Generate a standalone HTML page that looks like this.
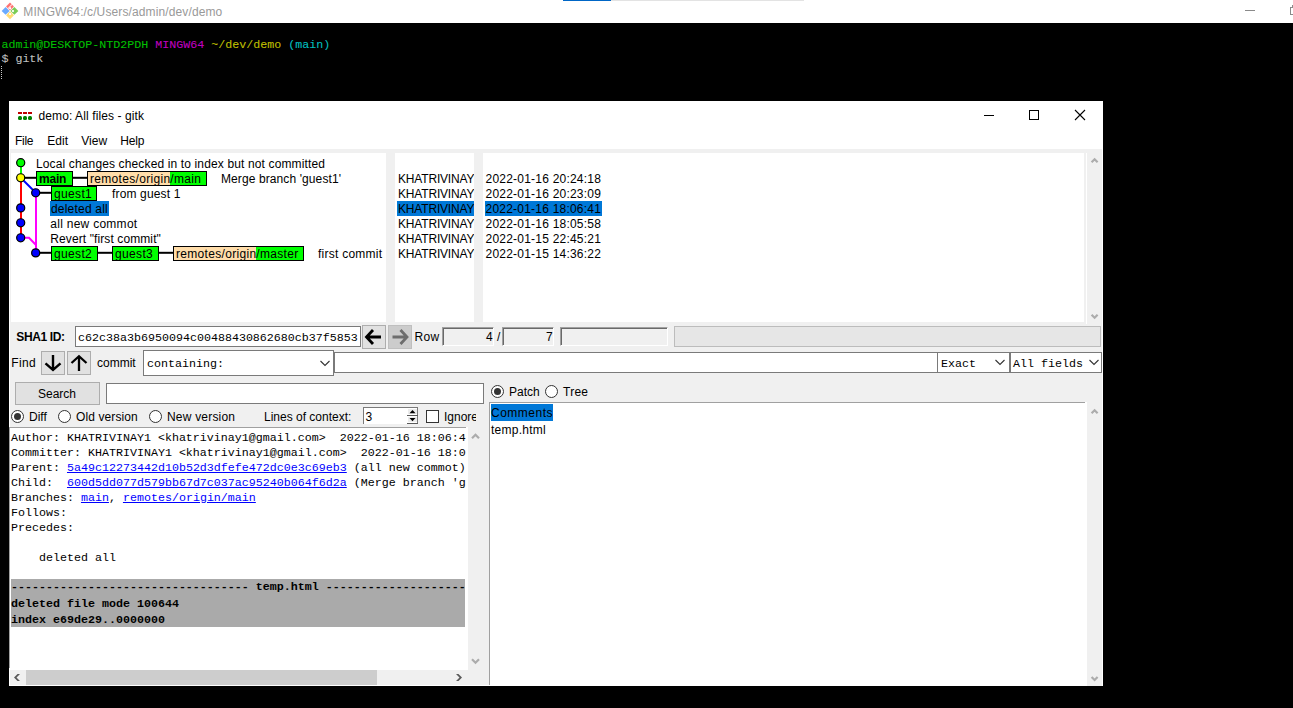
<!DOCTYPE html>
<html><head><meta charset="utf-8">
<style>
*{margin:0;padding:0;box-sizing:border-box}
html,body{width:1293px;height:708px;overflow:hidden;background:#000}
body{position:relative;font-family:"Liberation Sans",sans-serif;font-size:12px;color:#000}
.a{position:absolute}
.t{position:absolute;white-space:pre;line-height:15px;font-size:12px;font-family:"Liberation Sans",sans-serif}
.m{position:absolute;white-space:pre;line-height:15px;font-size:11.667px;font-family:"Liberation Mono",monospace}
.w{background:#fff}
.g{background:#f0f0f0}
.btn{position:absolute;background:#e1e1e1;border:1px solid #adadad}
.ent{position:absolute;background:#fff;border:1px solid #7a7a7a}
.sunk{position:absolute;background:#f0f0f0;border-top:1px solid #a0a0a0;border-left:1px solid #a0a0a0;border-right:1px solid #fff;border-bottom:1px solid #fff;box-shadow:inset 1px 1px 0 #696969}
.radio{position:absolute;width:13px;height:13px;border:1px solid #333;border-radius:50%;background:#fff}
.radio.on::after{content:"";position:absolute;left:2px;top:2px;width:7px;height:7px;border-radius:50%;background:#333}
.tag{position:absolute;height:15px;border:1px solid #000;background:#0f0}
.dot{position:absolute;width:10px;height:10px;border-radius:50%;border:1px solid #000}
.hl{position:absolute;background:#0078d7}
</style></head><body>

<!-- ===== terminal window ===== -->
<div class="a w" style="left:0;top:0;width:1293px;height:23px"></div>
<div class="a" style="left:563px;top:0;width:48px;height:1px;background:#0066c6"></div>
<div class="a" style="left:611px;top:0;width:193px;height:1px;background:#e3e3e3"></div>
<svg class="a" style="left:0;top:0" width="22" height="23" viewBox="0 0 22 23">
  <g transform="rotate(45 10 10.9)">
    <rect x="4.1" y="5.0" width="5.6" height="5.6" fill="#ff7373"/>
    <rect x="10.3" y="5.0" width="5.6" height="5.6" fill="#7acc55"/>
    <rect x="10.3" y="11.2" width="5.6" height="5.6" fill="#ffdb73"/>
    <rect x="4.1" y="11.2" width="5.6" height="5.6" fill="#6aaaff"/>
    <circle cx="8.2" cy="8.9" r="1.1" fill="#fff"/>
    <circle cx="12.2" cy="8.9" r="1.1" fill="#fff"/>
    <circle cx="12.2" cy="13" r="1.1" fill="#fff"/>
    <rect x="6.5" y="5" width="0.8" height="5.6" fill="#fff"/>
  </g>
</svg>
<div class="t" style="left:23.3px;top:5px;color:#999;letter-spacing:0.12px">MINGW64:/c/Users/admin/dev/demo</div>
<div class="a" style="left:1245px;top:10px;width:10px;height:1px;background:#8a8a8a"></div>
<div class="a" style="left:1290px;top:7px;width:10px;height:8px;border:1px solid #8a8a8a"></div>
<div class="a" style="left:1292px;top:5px;width:5px;height:3px;border-top:1px solid #8a8a8a;border-left:1px solid #8a8a8a"></div>

<div class="m" style="left:1.4px;top:38px;color:#00bf00;-webkit-text-stroke:0.1px">admin@DESKTOP-NTD2PDH <span style="color:#bf00bf">MINGW64</span> <span style="color:#bfbf00">~/dev/demo</span> <span style="color:#00bfbf">(main)</span></div>
<div class="m" style="left:1.4px;top:52px;color:#bfbfbf;-webkit-text-stroke:0.1px">$ gitk</div>
<div class="a" style="left:1px;top:66px;width:1px;height:13px;border-left:1px dotted #c8c8c8"></div>

<!-- ===== gitk window ===== -->
<div class="a" style="left:9px;top:101px;width:1094px;height:585px;background:#f0f0f0;border:1px solid #fff"></div>
<div class="a w" style="left:10px;top:101px;width:1092px;height:48px"></div>
<!-- icon -->
<div class="a" style="left:18px;top:112px;width:4px;height:2px;background:#c00000"></div>
<div class="a" style="left:23px;top:112px;width:4px;height:2px;background:#c00000"></div>
<div class="a" style="left:28px;top:112px;width:4px;height:2px;background:#c00000"></div>
<div class="a" style="left:18px;top:116px;width:4px;height:4px;background:#008000;border-radius:1.5px"></div>
<div class="a" style="left:23px;top:116px;width:4px;height:4px;background:#008000;border-radius:1.5px"></div>
<div class="a" style="left:28px;top:116px;width:4px;height:4px;background:#008000;border-radius:1.5px"></div>
<div class="t" style="left:38.5px;top:109px;letter-spacing:0.1px">demo: All files - gitk</div>
<!-- window buttons -->
<div class="a" style="left:984px;top:115px;width:10px;height:1px;background:#000"></div>
<div class="a" style="left:1029px;top:110px;width:10px;height:10px;border:1px solid #000"></div>
<svg class="a" style="left:1074px;top:109px" width="12" height="12" viewBox="0 0 12 12"><path d="M1 1L11 11M11 1L1 11" stroke="#000" stroke-width="1.1"/></svg>
<!-- menu -->
<div class="t" style="left:15px;top:134px;letter-spacing:-0.3px">File</div>
<div class="t" style="left:47.3px;top:134px">Edit</div>
<div class="t" style="left:81.3px;top:134px">View</div>
<div class="t" style="left:120.3px;top:134px;letter-spacing:-0.2px">Help</div>

<!-- ===== top canvases ===== -->
<div class="a w" style="left:11px;top:153px;width:375px;height:169px;overflow:hidden">
<svg class="a" style="left:-11px;top:-153px" width="386" height="330" viewBox="0 0 386 330">
  <g fill="none" stroke-width="2">
    <line x1="21" y1="163" x2="21" y2="178" stroke="#00ff00"/>
    <line x1="21" y1="178" x2="21" y2="238" stroke="#ff0000"/>
    <line x1="21" y1="178" x2="36" y2="193" stroke="#0000ff"/>
    <line x1="36" y1="193" x2="36" y2="253" stroke="#ff00ff"/>
    <polyline points="21,237.8 29,237.8 36,245" stroke="#ff00ff"/>
    <line x1="21" y1="177.8" x2="37" y2="177.8" stroke="#000"/>
    <line x1="72" y1="177.8" x2="88" y2="177.8" stroke="#000"/>
    <line x1="36" y1="192.8" x2="52" y2="192.8" stroke="#000"/>
    <line x1="36" y1="252.8" x2="52" y2="252.8" stroke="#000"/>
    <line x1="97" y1="252.8" x2="113" y2="252.8" stroke="#000"/>
    <line x1="158" y1="252.8" x2="174" y2="252.8" stroke="#000"/>
  </g>
  <g stroke="#000" stroke-width="1.2">
    <circle cx="20.7" cy="162.7" r="4.05" fill="#00ff00"/>
    <circle cx="20.7" cy="177.8" r="4.05" fill="#ffff00"/>
    <circle cx="35.7" cy="192.8" r="4.05" fill="#0000ff"/>
    <circle cx="20.7" cy="207.9" r="4.05" fill="#0000ff"/>
    <circle cx="20.7" cy="222.8" r="4.05" fill="#0000ff"/>
    <circle cx="20.7" cy="237.8" r="4.05" fill="#0000ff"/>
    <circle cx="35.7" cy="252.9" r="4.05" fill="#0000ff"/>
  </g>
</svg>
</div>
<div class="t" style="left:36px;top:157px;letter-spacing:0.135px">Local changes checked in to index but not committed</div>
<!-- row1 tags -->
<div class="tag" style="left:36px;top:171px;width:37px"></div>
<div class="t" style="left:39px;top:172px;font-weight:bold;letter-spacing:-0.2px">main</div>
<div class="tag" style="left:87px;top:171px;width:120px;background:linear-gradient(90deg,#ffddaa 0,#ffddaa 82px,#00ff00 82px)"></div>
<div class="t" style="left:90px;top:172px;letter-spacing:0.31px">remotes/origin/main</div>
<div class="t" style="left:221px;top:172px;letter-spacing:0.1px">Merge branch 'guest1'</div>
<!-- row2 -->
<div class="tag" style="left:51px;top:186px;width:46px"></div>
<div class="t" style="left:54px;top:187px;letter-spacing:0.35px">guest1</div>
<div class="t" style="left:112px;top:187px;letter-spacing:0.15px">from guest 1</div>
<!-- row3 -->
<div class="hl" style="left:50px;top:201px;width:59px;height:15px"></div>
<div class="t" style="left:51px;top:202px;letter-spacing:0.2px">deleted all</div>
<!-- row4 -->
<div class="t" style="left:50.3px;top:217px;letter-spacing:0.27px">all new commot</div>
<!-- row5 -->
<div class="t" style="left:50.3px;top:232px;letter-spacing:0.1px">Revert "first commit"</div>
<!-- row6 -->
<div class="tag" style="left:51px;top:246px;width:47px"></div>
<div class="t" style="left:54px;top:247px;letter-spacing:0.35px">guest2</div>
<div class="tag" style="left:112px;top:246px;width:47px"></div>
<div class="t" style="left:115px;top:247px;letter-spacing:0.35px">guest3</div>
<div class="tag" style="left:173px;top:246px;width:131px;background:linear-gradient(90deg,#ffddaa 0,#ffddaa 82px,#00ff00 82px)"></div>
<div class="t" style="left:176px;top:247px;letter-spacing:0.31px">remotes/origin/master</div>
<div class="t" style="left:318px;top:247px;letter-spacing:0.25px">first commit</div>

<div class="a w" style="left:395px;top:153px;width:79px;height:169px"></div>
<div class="hl" style="left:397px;top:201px;width:77px;height:15px"></div>
<div class="a" style="left:395px;top:153px;width:79px;height:169px;overflow:hidden"><div class="t" style="left:3px;top:19px;letter-spacing:-0.18px;line-height:15px">KHATRIVINAY
KHATRIVINAY
KHATRIVINAY
KHATRIVINAY
KHATRIVINAY
KHATRIVINAY</div></div>
<div class="a w" style="left:483px;top:153px;width:601px;height:169px"></div>
<div class="hl" style="left:485px;top:201px;width:117px;height:15px"></div>
<div class="t" style="left:485.5px;top:172px;letter-spacing:0.22px">2022-01-16 20:24:18
2022-01-16 20:23:09
2022-01-16 18:06:41
2022-01-16 18:05:58
2022-01-15 22:45:21
2022-01-15 14:36:22</div>
<div class="a" style="left:1086px;top:153px;width:1px;height:171px;background:#fff"></div>
<svg class="a" style="left:1087px;top:153px" width="15" height="170" viewBox="0 0 15 170">
  <polyline points="4.6,9.2 7.6,6.2 10.6,9.2" fill="none" stroke="#acacac" stroke-width="2.2"/>
  <polyline points="4.6,161.8 7.6,164.8 10.6,161.8" fill="none" stroke="#acacac" stroke-width="2.2"/>
</svg>

<!-- ===== SHA1 row ===== -->
<div class="t" style="left:16.3px;top:330px;font-weight:bold;letter-spacing:-0.38px">SHA1 ID:</div>
<div class="ent" style="left:75px;top:326px;width:286px;height:21px"></div>
<div class="m" style="left:78px;top:331px">c62c38a3b6950094c00488430862680cb37f5853</div>
<div class="btn" style="left:362px;top:325px;width:24px;height:24px"></div>
<svg class="a" style="left:362px;top:325px" width="24" height="24" viewBox="0 0 24 24">
  <path d="M4.5 12H19M11 5L4.5 12L11 19" fill="none" stroke="#000" stroke-width="2.8"/>
</svg>
<div class="btn" style="left:388px;top:325px;width:24px;height:24px;background:#cccccc;border-color:#bfbfbf"></div>
<svg class="a" style="left:388px;top:325px" width="24" height="24" viewBox="0 0 24 24">
  <path d="M4.5 12H19M12.5 5L19 12L12.5 19" fill="none" stroke="#6d6d6d" stroke-width="2.8"/>
</svg>
<div class="t" style="left:414.5px;top:330px;letter-spacing:0.3px">Row</div>
<div class="sunk" style="left:442px;top:327px;width:52px;height:19px"></div>
<div class="t" style="left:486px;top:330px">4</div>
<div class="t" style="left:497px;top:330px">/</div>
<div class="sunk" style="left:502px;top:327px;width:52px;height:19px"></div>
<div class="t" style="left:546px;top:330px">7</div>
<div class="sunk" style="left:560px;top:327px;width:108px;height:19px"></div>
<div class="a" style="left:674px;top:326px;width:427px;height:21px;background:#e6e6e6;border:1px solid #bcbcbc"></div>

<!-- ===== Find row ===== -->
<div class="t" style="left:11.2px;top:356px;letter-spacing:0.4px">Find</div>
<div class="btn" style="left:41px;top:351px;width:24px;height:24px"></div>
<svg class="a" style="left:41px;top:351px" width="24" height="24" viewBox="0 0 24 24">
  <path d="M12 4V18.5M4.5 12.3L12 19L19.5 12.3" fill="none" stroke="#000" stroke-width="2.4"/>
</svg>
<div class="btn" style="left:67px;top:351px;width:24px;height:24px"></div>
<svg class="a" style="left:67px;top:351px" width="24" height="24" viewBox="0 0 24 24">
  <path d="M12 20V5M4.5 12L12 5.2L19.5 12" fill="none" stroke="#000" stroke-width="2.3"/>
</svg>
<div class="t" style="left:97px;top:356px">commit</div>
<div class="ent" style="left:143px;top:350px;width:191px;height:26px"></div>
<div class="m" style="left:147px;top:357px">containing:</div>
<svg class="a" style="left:319px;top:359px" width="12" height="9" viewBox="0 0 12 9"><polyline points="1.5,2 6,6.5 10.5,2" fill="none" stroke="#333" stroke-width="1.1"/></svg>
<div class="ent" style="left:334px;top:352px;width:604px;height:21px"></div>
<div class="ent" style="left:937px;top:352px;width:73px;height:21px"></div>
<div class="m" style="left:941px;top:357px">Exact</div>
<svg class="a" style="left:994px;top:358px" width="12" height="9" viewBox="0 0 12 9"><polyline points="1.5,2 6,6.5 10.5,2" fill="none" stroke="#333" stroke-width="1.1"/></svg>
<div class="ent" style="left:1010px;top:352px;width:92px;height:21px"></div>
<div class="m" style="left:1013px;top:357px">All fields</div>
<svg class="a" style="left:1088px;top:358px" width="12" height="9" viewBox="0 0 12 9"><polyline points="1.5,2 6,6.5 10.5,2" fill="none" stroke="#333" stroke-width="1.1"/></svg>

<!-- ===== search row ===== -->
<div class="btn" style="left:15px;top:382px;width:85px;height:23px"></div>
<div class="t" style="left:38px;top:387px">Search</div>
<div class="ent" style="left:106px;top:383px;width:378px;height:21px"></div>
<div class="radio on" style="left:491px;top:385px"></div>
<div class="t" style="left:509px;top:385px">Patch</div>
<div class="radio" style="left:545px;top:385px"></div>
<div class="t" style="left:563px;top:385px;letter-spacing:0.25px">Tree</div>

<!-- ===== diff options ===== -->
<div class="radio on" style="left:11px;top:410px"></div>
<div class="t" style="left:29px;top:410px">Diff</div>
<div class="radio" style="left:58px;top:410px"></div>
<div class="t" style="left:76px;top:410px;letter-spacing:0.1px">Old version</div>
<div class="radio" style="left:149px;top:410px"></div>
<div class="t" style="left:167px;top:410px;letter-spacing:0.2px">New version</div>
<div class="t" style="left:264px;top:410px">Lines of context:</div>
<div class="a" style="left:363px;top:407px;width:55px;height:17px;background:#fff;border:1px solid #7a7a7a;border-bottom:none"></div>
<div class="a" style="left:408px;top:409px;width:9px;height:5px;background:#ececec"></div>
<div class="a" style="left:408px;top:417px;width:9px;height:5px;background:#ececec"></div>
<div class="a" style="left:407px;top:415px;width:11px;height:1px;background:#5a5a5a"></div>
<div class="a" style="left:407px;top:423px;width:11px;height:1px;background:#5a5a5a"></div>
<svg class="a" style="left:407px;top:408px" width="11" height="16" viewBox="0 0 11 16">
  <path d="M2.5 5.2L5.5 2L8.5 5.2Z" fill="#000"/>
  <path d="M2.5 10L5.5 13.2L8.5 10Z" fill="#000"/>
</svg>
<div class="t" style="left:365.5px;top:410px">3</div>
<div class="a" style="left:426px;top:410px;width:13px;height:13px;border:1px solid #333;background:#fff"></div>
<div class="a" style="left:444px;top:410px;width:32px;height:15px;overflow:hidden"><div class="t" style="left:0;top:0">Ignore</div></div>

<!-- ===== diff text ===== -->
<div class="a w" style="left:9px;top:427px;width:459px;height:243px"></div>
<div class="a" style="left:9px;top:427px;width:1px;height:241px;background:#a0a0a0"></div>
<div class="a" style="left:9px;top:427px;width:457px;height:1px;background:#a0a0a0"></div>
<div class="a" style="left:10px;top:428px;width:456px;height:241px;overflow:hidden">
 <div class="a" style="left:1px;top:151px;width:454px;height:48px;background:#aaaaaa"></div>
 <div class="m" style="left:1px;top:3px">Author: KHATRIVINAY1 &lt;khatrivinay1@gmail.com&gt;  2022-01-16 18:06:41
Committer: KHATRIVINAY1 &lt;khatrivinay1@gmail.com&gt;  2022-01-16 18:06:41
Parent: <u style="color:#0000ff">5a49c12273442d10b52d3dfefe472dc0e3c69eb3</u> (all new commot)
Child:  <u style="color:#0000ff">600d5dd077d579bb67d7c037ac95240b064f6d2a</u> (Merge branch 'guest1')
Branches: <u style="color:#0000ff">main</u>, <u style="color:#0000ff">remotes/origin/main</u>
Follows:
Precedes:

    deleted all
</div>
 <div class="m" style="left:1px;top:151.5px;font-weight:bold">---------------------------------- temp.html ----------------------------------</div>
 <div class="m" style="left:1px;top:168px;font-weight:bold;line-height:16px">deleted file mode 100644
index e69de29..0000000</div>
</div>
<div class="a g" style="left:468px;top:428px;width:21px;height:242px"></div>
<svg class="a" style="left:468px;top:428px" width="21" height="242" viewBox="0 0 21 242">
  <polyline points="4,10.2 7.5,6.7 11,10.2" fill="none" stroke="#acacac" stroke-width="2.2"/>
  <polyline points="4,231.2 7.5,234.7 11,231.2" fill="none" stroke="#acacac" stroke-width="2.2"/>
</svg>
<!-- hscroll -->
<div class="a g" style="left:10px;top:670px;width:458px;height:15px"></div>
<div class="a" style="left:26px;top:670px;width:351px;height:15px;background:#cdcdcd"></div>
<svg class="a" style="left:10px;top:670px" width="456" height="15" viewBox="0 0 456 15">
  <polygon points="4,7.5 7.5,4 10,4 6.5,7.5 10,11 7.5,11" fill="#5a5a5a"/>
  <polygon points="452,7.5 448.5,4 446,4 449.5,7.5 446,11 448.5,11" fill="#5a5a5a"/>
</svg>

<!-- ===== file list ===== -->
<div class="a w" style="left:489px;top:402px;width:598px;height:283px;border-left:1px solid #a0a0a0"></div>
<div class="a" style="left:489px;top:402px;width:596px;height:1px;background:#a0a0a0"></div>
<div class="hl" style="left:491px;top:404px;width:62px;height:17px"></div>
<div class="t" style="left:491px;top:406px;letter-spacing:0.5px">Comments</div>
<div class="t" style="left:491px;top:423px;letter-spacing:0.25px">temp.html</div>
<div class="a g" style="left:1087px;top:402px;width:15px;height:284px"></div>
<svg class="a" style="left:1087px;top:402px" width="15" height="284" viewBox="0 0 15 284">
  <polyline points="4.6,11.2 7.6,8.2 10.6,11.2" fill="none" stroke="#acacac" stroke-width="2.2"/>
  <polyline points="4.6,275 7.6,278 10.6,275" fill="none" stroke="#acacac" stroke-width="2.2"/>
</svg>

<!-- PANES_PLACEHOLDER -->

</body></html>
